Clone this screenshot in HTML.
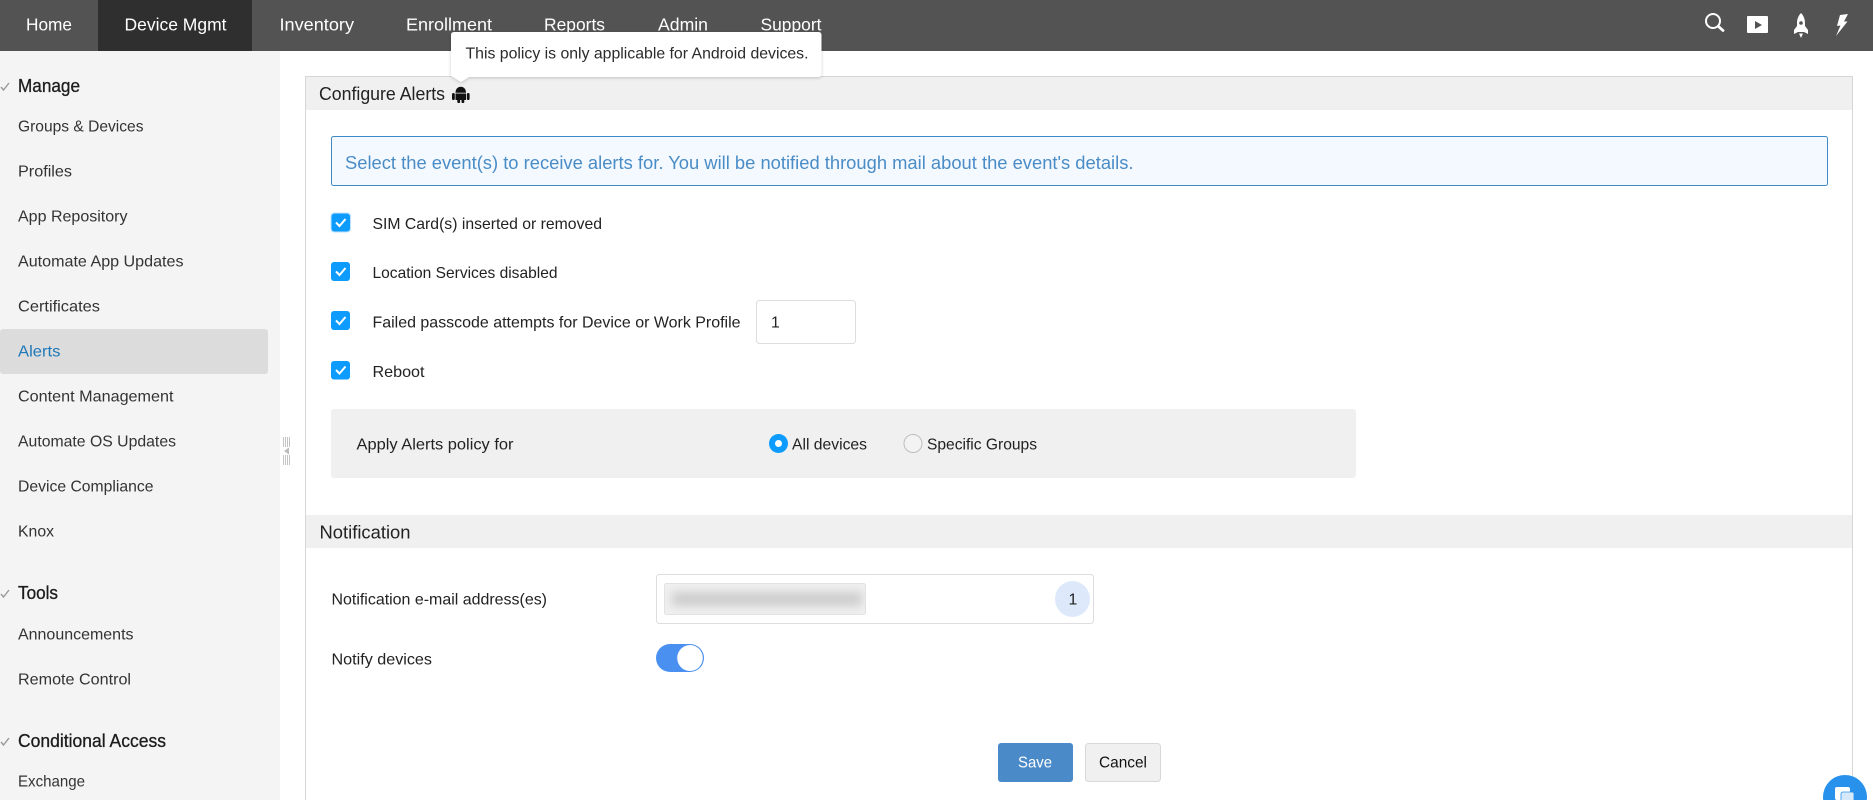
<!DOCTYPE html>
<html lang="en">
<head>
<meta charset="utf-8">
<title>Configure Alerts</title>
<style>
html,body{margin:0;padding:0;width:1873px;height:800px;overflow:hidden;background:#fff}
svg{display:block;position:absolute;left:0;top:0}
text{font-family:"Liberation Sans",sans-serif;font-size:15.5px;fill:#2f2f2f}
.n{font-size:17.5px;fill:#fff}
.s{font-size:15.8px;fill:#333}
.h{font-size:18px;fill:#1c1c1c;stroke:#1c1c1c;stroke-width:.3px}
.l{font-size:15.8px;fill:#222}
.t{font-size:18px;fill:#222}
</style>
</head>
<body>
<svg width="1873" height="800" viewBox="0 0 1873 800" xmlns="http://www.w3.org/2000/svg">
<defs>
<filter id="sh" x="-10%" y="-30%" width="120%" height="170%"><feDropShadow dx="0" dy="1" stdDeviation="1.500" flood-color="#000" flood-opacity=".2"/></filter>
<filter id="bl" x="-15%" y="-80%" width="130%" height="260%"><feGaussianBlur stdDeviation="5"/></filter>
<clipPath id="chip"><rect x="665" y="584" width="200" height="30" rx="2"/></clipPath>
</defs>

<!-- top nav -->
<rect x="0" y="0" width="1873" height="51" fill="#535353"/>
<rect x="98" y="0" width="154" height="51" fill="#2f2f2f"/>
<text class="n" x="26" y="30.500" textLength="46" lengthAdjust="spacingAndGlyphs">Home</text>
<text class="n" x="124.500" y="30.500" textLength="102" lengthAdjust="spacingAndGlyphs">Device Mgmt</text>
<text class="n" x="279.500" y="30.500" textLength="74.500" lengthAdjust="spacingAndGlyphs">Inventory</text>
<text class="n" x="406" y="30.500" textLength="86" lengthAdjust="spacingAndGlyphs">Enrollment</text>
<text class="n" x="544" y="30.500" textLength="61" lengthAdjust="spacingAndGlyphs">Reports</text>
<text class="n" x="658" y="30.500" textLength="50" lengthAdjust="spacingAndGlyphs">Admin</text>
<text class="n" x="760.500" y="30.500" textLength="61" lengthAdjust="spacingAndGlyphs">Support</text>

<!-- nav icons -->
<circle cx="1713" cy="21" r="7" fill="none" stroke="#fff" stroke-width="2"/>
<path d="M1718.500 26.500L1723 30.500" stroke="#fff" stroke-width="2.800" stroke-linecap="round"/>
<rect x="1747" y="16" width="21" height="17" rx="1" fill="#fff"/>
<path d="M1755 21L1762 25L1755 29Z" fill="#535353"/>
<path d="M1801 13C1798.500 15.500 1797 19 1797 23V26L1794 30V34L1798 32H1804L1808 34V30L1805 26V23C1805 19 1803.500 15.500 1801 13Z" fill="#fff"/>
<circle cx="1801" cy="23" r="1.800" fill="#535353"/>
<path d="M1799 33.500H1803L1801 38Z" fill="#fff"/>
<path d="M1840 15L1848 14L1844 21.500L1847.500 21.500L1836 36L1840.500 25.500L1837 26Z" fill="#fff"/>

<!-- sidebar -->
<rect x="0" y="51" width="280" height="749" fill="#f4f4f4"/>
<rect x="0" y="329" width="268" height="45" rx="3" fill="#dcdcdc"/>
<g fill="none" stroke="#999" stroke-width="1.400">
<path d="M1 87L3.500 90L9 83"/>
<path d="M1 594L3.500 597L9 590"/>
<path d="M1 742L3.500 745L9 738"/>
</g>
<text class="h" x="18" y="92" textLength="62" lengthAdjust="spacingAndGlyphs">Manage</text>
<text class="s" x="18" y="131.500" textLength="125.500" lengthAdjust="spacingAndGlyphs">Groups &amp; Devices</text>
<text class="s" x="18" y="176.500" textLength="54" lengthAdjust="spacingAndGlyphs">Profiles</text>
<text class="s" x="18" y="221.500" textLength="109.500" lengthAdjust="spacingAndGlyphs">App Repository</text>
<text class="s" x="18" y="266.500" textLength="165.500" lengthAdjust="spacingAndGlyphs">Automate App Updates</text>
<text class="s" x="18" y="311.500" textLength="82" lengthAdjust="spacingAndGlyphs">Certificates</text>
<text class="s" x="18" y="356.500" textLength="42.500" lengthAdjust="spacingAndGlyphs" style="fill:#1f78b8">Alerts</text>
<text class="s" x="18" y="401.500" textLength="155.500" lengthAdjust="spacingAndGlyphs">Content Management</text>
<text class="s" x="18" y="446.500" textLength="158" lengthAdjust="spacingAndGlyphs">Automate OS Updates</text>
<text class="s" x="18" y="491.500" textLength="135.500" lengthAdjust="spacingAndGlyphs">Device Compliance</text>
<text class="s" x="18" y="536.500" textLength="36" lengthAdjust="spacingAndGlyphs">Knox</text>
<text class="h" x="18" y="599" textLength="40" lengthAdjust="spacingAndGlyphs">Tools</text>
<text class="s" x="18" y="639.500" textLength="115.500" lengthAdjust="spacingAndGlyphs">Announcements</text>
<text class="s" x="18" y="684.500" textLength="113" lengthAdjust="spacingAndGlyphs">Remote Control</text>
<text class="h" x="18" y="747" textLength="148" lengthAdjust="spacingAndGlyphs">Conditional Access</text>
<text class="s" x="18" y="786.500" textLength="67" lengthAdjust="spacingAndGlyphs">Exchange</text>

<!-- splitter -->
<g stroke="#c4c4c4" stroke-width="1">
<path d="M283.500 437V465M285.500 437V465M287.500 437V465M289.500 437V465"/>
</g>
<rect x="283" y="447" width="7" height="8" fill="#fff"/>
<path d="M284 451L289 447.500V454.500Z" fill="#bbb"/>

<!-- panel -->
<rect x="305.500" y="76.500" width="1547" height="730" fill="#fff" stroke="#d6d6d6"/>
<rect x="306" y="77" width="1546" height="33" fill="#f0f0f0"/>
<text class="t" x="319" y="100" textLength="126" lengthAdjust="spacingAndGlyphs">Configure Alerts</text>

<!-- android icon -->
<g fill="#111">
<path d="M455.500 92.800C455.500 88.800 458 86.800 460.800 86.800C463.600 86.800 466 88.800 466 92.800Z"/>
<rect x="455.500" y="93.500" width="10.500" height="6.500"/>
<rect x="452" y="93" width="2.800" height="7" rx="1.400"/>
<rect x="466.800" y="93" width="2.800" height="7" rx="1.400"/>
<rect x="457.300" y="99.500" width="2.800" height="3.500" rx="1"/>
<rect x="461.500" y="99.500" width="2.800" height="3.500" rx="1"/>
</g>

<!-- info box -->
<rect x="331.500" y="136.500" width="1496" height="49" rx="2" fill="#f4f9ff" stroke="#3f8ac6"/>
<text x="345" y="169" textLength="788.500" lengthAdjust="spacingAndGlyphs" style="font-size:18.500px;fill:#4a8cc6">Select the event(s) to receive alerts for. You will be notified through mail about the event's details.</text>

<!-- checkboxes -->
<g fill="#0d9bfd">
<rect x="330.500" y="212.500" width="20.500" height="20" rx="3.500" fill="#bfe3ff"/>
<rect x="331.500" y="213.500" width="18.500" height="18" rx="3"/>
<rect x="331" y="262" width="19" height="19" rx="3"/>
<rect x="331" y="311" width="19" height="19" rx="3"/>
<rect x="331" y="361" width="19" height="18.500" rx="3"/>
</g>
<g fill="none" stroke="#fff" stroke-width="2">
<path d="M336 222.500L339.500 226L345.500 219"/>
<path d="M336 271.500L339.500 275L345.500 268"/>
<path d="M336 320.500L339.500 324L345.500 317"/>
<path d="M336 370L339.500 373.500L345.500 366.500"/>
</g>
<text class="l" x="372.500" y="229" textLength="229.500" lengthAdjust="spacingAndGlyphs">SIM Card(s) inserted or removed</text>
<text class="l" x="372.500" y="278" textLength="185" lengthAdjust="spacingAndGlyphs">Location Services disabled</text>
<text class="l" x="372.500" y="327.500" textLength="368" lengthAdjust="spacingAndGlyphs">Failed passcode attempts for Device or Work Profile</text>
<text class="l" x="372.500" y="377" textLength="52" lengthAdjust="spacingAndGlyphs">Reboot</text>
<rect x="756.500" y="300.500" width="99" height="43" rx="3" fill="#fff" stroke="#ddd"/>
<text class="l" x="771" y="327.500">1</text>

<!-- apply box -->
<rect x="331" y="409" width="1025" height="69" rx="3" fill="#f0f0f0"/>
<text class="l" x="356.500" y="449.500" textLength="157" lengthAdjust="spacingAndGlyphs">Apply Alerts policy for</text>
<circle cx="778.500" cy="443.500" r="9.500" fill="#0d9bfd"/>
<circle cx="778.500" cy="443.500" r="3.500" fill="#fff"/>
<text class="l" x="792" y="449.500" textLength="75" lengthAdjust="spacingAndGlyphs">All devices</text>
<circle cx="913" cy="443.500" r="9" fill="#f3f3f3" stroke="#bdbdbd"/>
<text class="l" x="927" y="449.500" textLength="110" lengthAdjust="spacingAndGlyphs">Specific Groups</text>

<!-- notification -->
<rect x="306" y="515" width="1546" height="33" fill="#f0f0f0"/>
<text class="t" x="319.500" y="538.500" textLength="91" lengthAdjust="spacingAndGlyphs">Notification</text>
<text class="l" x="331.500" y="604.500" textLength="215.500" lengthAdjust="spacingAndGlyphs">Notification e-mail address(es)</text>
<rect x="656.500" y="574.500" width="437" height="49" rx="3" fill="#fff" stroke="#ddd"/>
<rect x="664.500" y="583.500" width="201" height="31" rx="2" fill="#f0f0f0" stroke="#e2e2e2"/>
<g clip-path="url(#chip)"><rect x="672" y="592" width="190" height="14" fill="#cccccc" filter="url(#bl)"/></g>
<ellipse cx="1072.500" cy="599" rx="17.500" ry="18" fill="#dde9fb"/>
<text class="l" x="1068.500" y="604.500">1</text>
<text class="l" x="331.500" y="664.500" textLength="100.500" lengthAdjust="spacingAndGlyphs">Notify devices</text>
<rect x="656" y="644" width="48" height="28" rx="14" fill="#4a90f0"/>
<ellipse cx="690" cy="658" rx="12.800" ry="13" fill="#fff"/>

<!-- buttons -->
<rect x="998" y="743" width="75" height="39" rx="3" fill="#4a8ac8"/>
<text x="1018" y="767.500" textLength="34" lengthAdjust="spacingAndGlyphs" style="font-size:15.800px;fill:#fff">Save</text>
<rect x="1085.500" y="743.500" width="75" height="38" rx="3" fill="#f0f0f0" stroke="#d8d8d8"/>
<text x="1099" y="767.500" textLength="48" lengthAdjust="spacingAndGlyphs" style="font-size:15.800px;fill:#111">Cancel</text>

<!-- chat bubble -->
<circle cx="1845" cy="797" r="22" fill="#2791ec"/>
<rect x="1835" y="787" width="15" height="13" rx="2" fill="#fff"/>
<rect x="1841" y="792" width="13" height="10" rx="2" fill="#d6e9fb" stroke="#2791ec" stroke-width=".8"/>

<!-- tooltip -->
<path d="M454 32H818.500Q821.500 32 821.500 35V74Q821.500 77 818.500 77H469L461 82L453 77Q451 77 451 74V35Q451 32 454 32Z" fill="#fff" filter="url(#sh)"/>
<text class="l" x="465.500" y="58.500" textLength="343" lengthAdjust="spacingAndGlyphs" style="fill:#2b2b2b">This policy is only applicable for Android devices.</text>
</svg>
</body>
</html>
